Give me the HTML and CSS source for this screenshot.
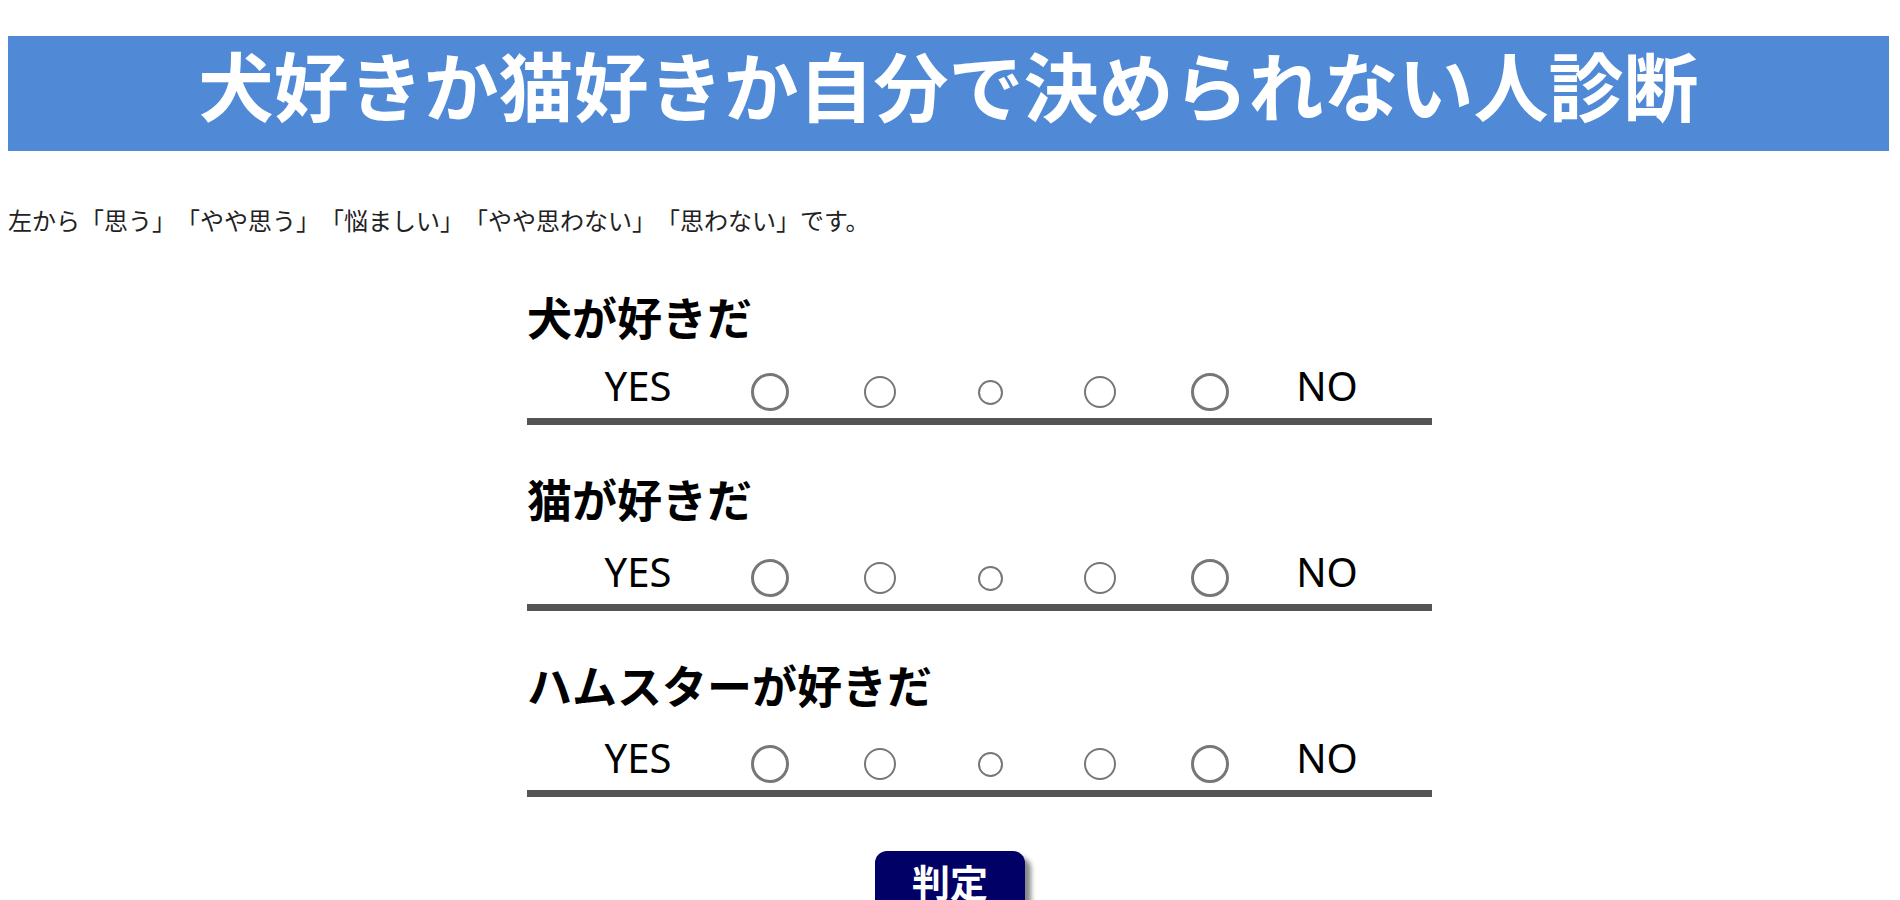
FILE: index.html
```html
<!DOCTYPE html>
<html lang="ja">
<head>
<meta charset="utf-8">
<title>犬好きか猫好きか自分で決められない人診断</title>
<link rel="stylesheet" href="styles.css">
</head>
<body>
<h1 class="title">犬好きか猫好きか自分で決められない人診断</h1>
<p class="note">左から「思う」「やや思う」「悩ましい」「やや思わない」「思わない」です。</p>
<div class="questions">
  <section class="question">
    <h2 class="q-title">犬が好きだ</h2>
    <div class="scale">
      <span class="label yes">YES</span>
      <span class="cell"><span class="dot big"></span></span>
      <span class="cell"><span class="dot mid"></span></span>
      <span class="cell"><span class="dot small"></span></span>
      <span class="cell"><span class="dot mid"></span></span>
      <span class="cell"><span class="dot big"></span></span>
      <span class="label no">NO</span>
    </div>
  </section>
  <section class="question">
    <h2 class="q-title">猫が好きだ</h2>
    <div class="scale">
      <span class="label yes">YES</span>
      <span class="cell"><span class="dot big"></span></span>
      <span class="cell"><span class="dot mid"></span></span>
      <span class="cell"><span class="dot small"></span></span>
      <span class="cell"><span class="dot mid"></span></span>
      <span class="cell"><span class="dot big"></span></span>
      <span class="label no">NO</span>
    </div>
  </section>
  <section class="question">
    <h2 class="q-title">ハムスターが好きだ</h2>
    <div class="scale">
      <span class="label yes">YES</span>
      <span class="cell"><span class="dot big"></span></span>
      <span class="cell"><span class="dot mid"></span></span>
      <span class="cell"><span class="dot small"></span></span>
      <span class="cell"><span class="dot mid"></span></span>
      <span class="cell"><span class="dot big"></span></span>
      <span class="label no">NO</span>
    </div>
  </section>
</div>
<div class="actions">
  <button class="judge" type="button">判定</button>
</div>
</body>
</html>
```

FILE: styles.css
```css
html, body {
  margin: 0;
  padding: 0;
  background: #ffffff;
}

body {
  padding: 36px 11px 0 8px;
  font-family: "Noto Sans CJK JP", "Noto Sans", sans-serif;
  color: #000;
  text-spacing-trim: space-all;
}

.title {
  margin: 0;
  box-sizing: border-box;
  height: 115px;
  padding-top: 3px;
  background: #5089d5;
  color: #ffffff;
  font-size: 75px;
  font-weight: 700;
  line-height: 90px;
  text-align: center;
  white-space: nowrap;
}

.note {
  margin: 51px 0 0 0;
  font-size: 24px;
  line-height: 36px;
  height: 36px;
  color: #222;
  white-space: nowrap;
}

.questions {
  margin: 53px 0 0 519px;
  width: 905px;
  display: flex;
  flex-direction: column;
  gap: 48px;
}

.q-title {
  margin: 0 0 27px 0;
  font-size: 45px;
  font-weight: 700;
  line-height: 52px;
  height: 52px;
  white-space: nowrap;
}

.question:first-child .q-title {
  margin-bottom: 23px;
}

.scale {
  display: flex;
  align-items: center;
  height: 52px;
  border-bottom: 7px solid #555555;
  padding-left: 56px;
}

.label {
  font-family: "Noto Sans", "Open Sans", sans-serif;
  font-size: 40px;
  line-height: 40px;
  width: 110px;
  text-align: center;
  padding-bottom: 13px;
}

.yes {
  margin-right: 22px;
}

.no {
  margin-left: 7px;
}

.cell {
  width: 110px;
  display: flex;
  justify-content: center;
  align-items: center;
}

.dot {
  display: block;
  box-sizing: border-box;
  border-radius: 50%;
  border: 3px solid #777777;
}

.dot.big {
  width: 38px;
  height: 38px;
}

.dot.mid {
  width: 32px;
  height: 32px;
  border-width: 2.7px;
}

.dot.small {
  width: 25px;
  height: 25px;
  border-width: 2px;
}

.actions {
  margin-top: 54px;
  padding-left: 3px;
  text-align: center;
}

.judge {
  font-family: "Noto Sans CJK JP", sans-serif;
  font-size: 38px;
  font-weight: 700;
  line-height: 50px;
  color: #ffffff;
  background: #000066;
  border: none;
  border-radius: 12px;
  padding: 5px 37px 14px;
  box-shadow: 6px 6px 5px #888888;
  cursor: pointer;
}
```
